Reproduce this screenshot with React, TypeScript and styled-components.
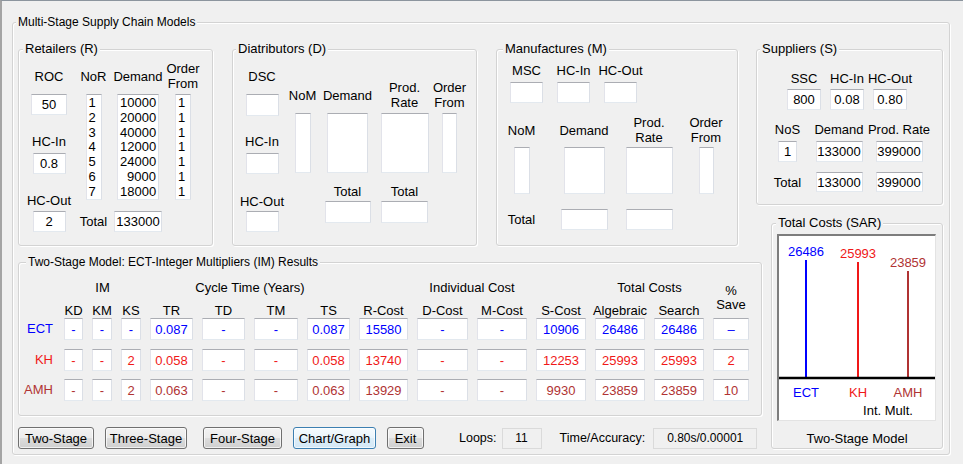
import React from 'react';
import styled, { createGlobalStyle } from 'styled-components';

const BLUE = '#0000ff';
const RED = '#f01818';
const BROWN = '#b03333';

const GlobalStyle = createGlobalStyle`
  * { box-sizing: border-box; }
  html, body { margin: 0; padding: 0; background: #f0f0f0; }
  body {
    font-family: "Liberation Sans", Arial, sans-serif;
    font-size: 13px;
    color: #000;
  }
`;

const Window = styled.div`
  width: 963px;
  height: 464px;
  overflow: hidden;
  background: #f0f0f0;
  border-top: 1px solid #8c959e;
  border-left: 2px solid #a4a4a4;
  padding: 14px 0 0 10px;
`;

const Panel = styled.fieldset<{ $area?: string }>`
  grid-area: ${(p) => p.$area ?? 'auto'};
  margin: 0;
  padding: 0;
  min-width: 0;
  border: 1px solid #d3d3d3;
  border-radius: 3px;
  box-shadow: inset 1px 1px 0 #fff, 1px 1px 0 #fff;
`;

const Frame = styled(Panel)`
  width: 938px;
  height: 440px;
`;

const Legend = styled.legend<{ $size?: number; $indent?: number }>`
  margin-left: ${(p) => p.$indent ?? 4}px;
  padding: 0 2px;
  font-size: ${(p) => p.$size ?? 13}px;
  line-height: 14px;
  background: #f0f0f0;
  white-space: nowrap;
`;

const Board = styled.div`
  display: grid;
  grid-template-columns: 195px 19px 245px 19px 242px 18px 6px 9px 172px;
  grid-template-rows: 163px 11px 30px 9px 161px 11px 22px;
  grid-template-areas:
    "ret . dis . man . sup sup sup"
    "ret . dis . man . . . ."
    "ret . dis . man . . . tot"
    ". . . . . . . . tot"
    "res res res res res res res . tot"
    ". . . . . . . . tot"
    "btn btn btn btn btn btn btn . tot";
  padding: 13px 0 0 5px;
`;

const PanelRow = styled.div<{ $pl: number; $gap?: number; $mt?: number }>`
  display: flex;
  align-items: flex-start;
  gap: ${(p) => p.$gap ?? 5}px;
  padding-left: ${(p) => p.$pl}px;
  margin-top: ${(p) => p.$mt ?? 0}px;
`;

const Stack = styled.div<{ $w: number }>`
  width: ${(p) => p.$w}px;
  display: flex;
  flex-direction: column;
  align-items: center;
`;

const Grid = styled.div<{ $cols: string; $rows: string; $gap?: number; $mt?: number; $ml?: number }>`
  display: grid;
  grid-template-columns: ${(p) => p.$cols};
  grid-template-rows: ${(p) => p.$rows};
  column-gap: ${(p) => p.$gap ?? 0}px;
  justify-items: center;
  align-items: start;
  margin-top: ${(p) => p.$mt ?? 0}px;
  margin-left: ${(p) => p.$ml ?? 0}px;
`;

const Label = styled.div<{ $mt?: number; $ml?: number; $self?: string; $size?: number }>`
  margin-top: ${(p) => p.$mt ?? 0}px;
  margin-left: ${(p) => p.$ml ?? 0}px;
  align-self: ${(p) => p.$self ?? 'auto'};
  font-size: ${(p) => p.$size ?? 13}px;
  line-height: 15px;
  white-space: nowrap;
  text-align: center;
`;

const Head = styled.div`
  height: 30px;
  display: flex;
  align-items: center;
  justify-content: center;
  text-align: center;
  line-height: 15px;
  white-space: nowrap;
`;

const Edit = styled.div<{ $w: number; $h?: number; $mt?: number; $color?: string; $self?: string; $at?: string }>`
  grid-area: ${(p) => p.$at ?? 'auto'};
  width: ${(p) => p.$w}px;
  height: ${(p) => p.$h ?? 21}px;
  margin-top: ${(p) => p.$mt ?? 0}px;
  align-self: ${(p) => p.$self ?? 'auto'};
  display: flex;
  align-items: center;
  justify-content: center;
  background: #fff;
  border: 1px solid;
  border-color: #abadb3 #dbdfe6 #e3e9ef #e2e3ea;
  color: ${(p) => p.$color ?? '#000'};
  line-height: 15px;
  white-space: nowrap;
`;

const ListBox = styled.div<{ $w: number; $h: number; $align?: string }>`
  width: ${(p) => p.$w}px;
  height: ${(p) => p.$h}px;
  background: #fff;
  border: 1px solid;
  border-color: #abadb3 #dbdfe6 #e3e9ef #e2e3ea;
  padding: 1px 2px 0;
  text-align: ${(p) => p.$align ?? 'left'};
  line-height: 14.8px;
  overflow: hidden;
`;

const Spacer = styled.div``;

const Axes = styled.div`
  width: 159px;
  height: 187px;
  margin: 4px 0 0 5px;
  background: #fff;
  border-top: 2px solid #7d7d7d;
  border-left: 2px solid #7d7d7d;
  border-right: 1px solid #e3e3e3;
  border-bottom: 1px solid #e3e3e3;
  svg { display: block; }
  text {
    font-family: "Liberation Sans", Arial, sans-serif;
    font-size: 13px;
  }
`;

const Caption = styled.div`
  margin-top: 9.5px;
  text-align: center;
  line-height: 15px;
`;

const Table = styled.div`
  display: grid;
  grid-template-columns: 36px 19px 20px 20px 43px 43px 44px 43px 49px 51px 50px 50px 50px 50px 36px;
  grid-template-rows: 22.5px 15.5px 31px 30px 22px;
  column-gap: 9px;
  justify-items: center;
  align-items: start;
  margin-top: 11px;
`;

const GroupHead = styled.div<{ $at: string }>`
  grid-area: ${(p) => p.$at};
  line-height: 15px;
  white-space: nowrap;
  text-align: center;
`;

const SaveHead = styled.div`
  grid-area: 1 / 15 / 3 / 16;
  align-self: end;
  margin-bottom: 6px;
  line-height: 14px;
  text-align: center;
`;

const RowLabel = styled.div<{ $color: string; $row: number }>`
  grid-area: ${(p) => p.$row} / 1;
  justify-self: end;
  padding-right: 2px;
  height: 22px;
  line-height: 22px;
  color: ${(p) => p.$color};
`;

const Footer = styled.div`
  grid-area: btn;
  display: flex;
  align-items: center;
`;

const Button = styled.button<{ $w: number; $ml?: number; $focus?: boolean }>`
  width: ${(p) => p.$w}px;
  height: 22px;
  margin: 0 0 0 ${(p) => p.$ml ?? 0}px;
  padding: 0;
  font: 13px "Liberation Sans", Arial, sans-serif;
  color: #000;
  border: 1px solid ${(p) => (p.$focus ? '#3c7fb1' : '#707070')};
  border-radius: 3px;
  background: ${(p) =>
    p.$focus
      ? 'linear-gradient(#f6fbfe, #e9f4fb 50%, #dcedf8 51%, #d3e8f6)'
      : 'linear-gradient(#f2f2f2, #ebebeb 50%, #dddddd 51%, #cfcfcf)'};
  box-shadow: inset 0 0 0 1px rgba(255, 255, 255, 0.7);
`;

const Readout = styled.div<{ $w: number; $ml?: number }>`
  width: ${(p) => p.$w}px;
  height: 21px;
  margin-left: ${(p) => p.$ml ?? 0}px;
  display: flex;
  align-items: center;
  justify-content: center;
  font-size: 12px;
  background: #f0f0f0;
  border: 1px solid #dadada;
`;

const resultCols = [
  { head: 'KD', w: 19 },
  { head: 'KM', w: 20 },
  { head: 'KS', w: 20 },
  { head: 'TR', w: 43 },
  { head: 'TD', w: 43 },
  { head: 'TM', w: 44 },
  { head: 'TS', w: 43 },
  { head: 'R-Cost', w: 49 },
  { head: 'D-Cost', w: 51 },
  { head: 'M-Cost', w: 50 },
  { head: 'S-Cost', w: 50 },
  { head: 'Algebraic', w: 50 },
  { head: 'Search', w: 50 },
  { head: '', w: 36 },
];

const results = [
  { name: 'ECT', color: BLUE, values: ['-', '-', '-', '0.087', '-', '-', '0.087', '15580', '-', '-', '10906', '26486', '26486', '–'] },
  { name: 'KH', color: RED, values: ['-', '-', '2', '0.058', '-', '-', '0.058', '13740', '-', '-', '12253', '25993', '25993', '2'] },
  { name: 'AMH', color: BROWN, values: ['-', '-', '2', '0.063', '-', '-', '0.063', '13929', '-', '-', '9930', '23859', '23859', '10'] },
];

const retailers = [
  [1, '10000'],
  [2, '20000'],
  [3, '40000'],
  [4, '12000'],
  [5, '24000'],
  [6, '9000'],
  [7, '18000'],
];

const Retailers: React.FC = () => (
  <Panel $area="ret">
    <Legend $indent={4}>Retailers (R)</Legend>
    <PanelRow $pl={7}>
      <Stack $w={46}>
        <Label $mt={12.5}>ROC</Label>
        <Edit $w={36} $mt={10.5}>50</Edit>
        <Label $mt={18.5}>HC-In</Label>
        <Edit $w={33} $mt={4.5}>0.8</Edit>
        <Label $mt={18.5}>HC-Out</Label>
        <Edit $w={33} $mt={3.5}>2</Edit>
      </Stack>
      <Grid $cols="33px 56px 34px" $rows="33px 117px 21px" $mt={5}>
        <Head>NoR</Head>
        <Head>Demand</Head>
        <Head>Order<br />From</Head>
        <ListBox $w={16} $h={106}>
          {retailers.map(([n]) => <div key={n}>{n}</div>)}
        </ListBox>
        <ListBox $w={42} $h={106} $align="right">
          {retailers.map(([n, d]) => <div key={n}>{d}</div>)}
        </ListBox>
        <ListBox $w={16} $h={106}>
          {retailers.map(([n]) => <div key={n}>1</div>)}
        </ListBox>
        <Label $self="center">Total</Label>
        <Edit $w={48}>133000</Edit>
        <Spacer />
      </Grid>
    </PanelRow>
  </Panel>
);

const Distributors: React.FC = () => (
  <Panel $area="dis">
    <Legend $indent={3}>Diatributors (D)</Legend>
    <PanelRow $pl={7}>
      <Stack $w={44}>
        <Label $mt={12.5}>DSC</Label>
        <Edit $w={33} $h={22} $mt={10.5} />
        <Label $mt={17.5}>HC-In</Label>
        <Edit $w={33} $mt={4.5} />
        <Label $mt={19.5}>HC-Out</Label>
        <Edit $w={33} $mt={2.5} />
      </Stack>
      <Grid $cols="27px 55px 51px 31px" $gap={4} $rows="33px 70.5px 17.5px 22px" $mt={24}>
        <Head>NoM</Head>
        <Head>Demand</Head>
        <Head>Prod.<br />Rate</Head>
        <Head>Order<br />From</Head>
        <ListBox $w={16} $h={60} />
        <ListBox $w={41} $h={60} />
        <ListBox $w={48} $h={60} />
        <ListBox $w={15} $h={60} />
        <Spacer />
        <Label>Total</Label>
        <Label>Total</Label>
        <Spacer />
        <Spacer />
        <Edit $w={46} $h={22} />
        <Edit $w={47} $h={22} />
        <Spacer />
      </Grid>
    </PanelRow>
  </Panel>
);

const Manufactures: React.FC = () => (
  <Panel $area="man">
    <Legend $indent={6}>Manufactures (M)</Legend>
    <PanelRow $pl={13} $gap={14} $mt={7}>
      {['MSC', 'HC-In', 'HC-Out'].map((t) => (
        <Stack key={t} $w={33}>
          <Label>{t}</Label>
          <Edit $w={33} $mt={4} />
        </Stack>
      ))}
    </PanelRow>
    <Grid $cols="47px 62px 52px 46px" $gap={8} $rows="32px 62px 21px" $mt={12} $ml={1}>
      <Head>NoM</Head>
      <Head>Demand</Head>
      <Head>Prod.<br />Rate</Head>
      <Head>Order<br />From</Head>
      <ListBox $w={16} $h={47} />
      <ListBox $w={41} $h={47} />
      <ListBox $w={47} $h={47} />
      <ListBox $w={15} $h={47} />
      <Label $self="center">Total</Label>
      <Edit $w={47} />
      <Edit $w={47} />
      <Spacer />
    </Grid>
  </Panel>
);

const Suppliers: React.FC = () => (
  <Panel $area="sup">
    <Legend $indent={3}>Suppliers (S)</Legend>
    <PanelRow $pl={30} $gap={9} $mt={14.5}>
      {[
        ['SSC', '800'],
        ['HC-In', '0.08'],
        ['HC-Out', '0.80'],
      ].map(([t, v]) => (
        <Stack key={t} $w={34}>
          <Label>{t}</Label>
          <Edit $w={34} $mt={3.5}>{v}</Edit>
        </Stack>
      ))}
    </PanelRow>
    <Grid $cols="41px 50px 58px" $gap={6} $rows="19.5px 31px 20px" $mt={11.5} $ml={10}>
      <Label>NoS</Label>
      <Label>Demand</Label>
      <Label>Prod. Rate</Label>
      <Edit $w={19}>1</Edit>
      <Edit $w={47}>133000</Edit>
      <Edit $w={47}>399000</Edit>
      <Label $self="center">Total</Label>
      <Edit $w={47} $h={20}>133000</Edit>
      <Edit $w={47} $h={20}>399000</Edit>
    </Grid>
  </Panel>
);

const bars = [
  { name: 'ECT', value: '26486', x: 27, top: 24, color: BLUE },
  { name: 'KH', value: '25993', x: 79, top: 26, color: RED },
  { name: 'AMH', value: '23859', x: 129, top: 35, color: BROWN },
];

const TotalCosts: React.FC = () => (
  <Panel $area="tot">
    <Legend $indent={4}>Total Costs (SAR)</Legend>
    <Axes>
      <svg width="156" height="184" viewBox="0 0 156 184">
        {bars.map((b) => (
          <g key={b.name}>
            <line x1={b.x} y1={b.top} x2={b.x} y2={142} stroke={b.color} strokeWidth="2" />
            <text x={b.x} y={b.top - 4.5} textAnchor="middle" fill={b.color}>{b.value}</text>
            <text x={b.x} y={160.5} textAnchor="middle" fill={b.color}>{b.name}</text>
          </g>
        ))}
        <line x1="0" y1="142" x2="156" y2="142" stroke="#000" strokeWidth="2.5" />
        <text x="109" y="178.5" textAnchor="middle" fill="#000">Int. Mult.</text>
      </svg>
    </Axes>
    <Caption>Two-Stage Model</Caption>
  </Panel>
);

const Results: React.FC = () => (
  <Panel $area="res">
    <Legend $size={12} $indent={7}>Two-Stage Model: ECT-Integer Multipliers (IM) Results</Legend>
    <Table>
      <GroupHead $at="1 / 2 / 2 / 5">IM</GroupHead>
      <GroupHead $at="1 / 5 / 2 / 9">Cycle Time (Years)</GroupHead>
      <GroupHead $at="1 / 10 / 2 / 12">Individual Cost</GroupHead>
      <GroupHead $at="1 / 13 / 2 / 15">Total Costs</GroupHead>
      <SaveHead>%<br />Save</SaveHead>
      {resultCols.map((c, i) =>
        c.head ? (
          <GroupHead key={c.head} $at={`2 / ${i + 2}`}>{c.head}</GroupHead>
        ) : null
      )}
      {results.map((r, ri) => (
        <React.Fragment key={r.name}>
          <RowLabel $color={r.color} $row={ri + 3}>{r.name}</RowLabel>
          {r.values.map((v, ci) => (
            <Edit key={ci} $at={`${ri + 3} / ${ci + 2}`} $w={resultCols[ci].w} $h={22} $color={r.color}>
              {v}
            </Edit>
          ))}
        </React.Fragment>
      ))}
    </Table>
  </Panel>
);

const Controls: React.FC = () => (
  <Footer>
    <Button $w={76}>Two-Stage</Button>
    <Button $w={82} $ml={11}>Three-Stage</Button>
    <Button $w={79} $ml={16}>Four-Stage</Button>
    <Button $w={83} $ml={11} $focus>Chart/Graph</Button>
    <Button $w={37} $ml={11}>Exit</Button>
    <Label $size={12.5} $ml={35}>Loops:</Label>
    <Readout $w={40} $ml={5}>11</Readout>
    <Label $size={12.5} $ml={18}>Time/Accuracy:</Label>
    <Readout $w={104} $ml={8}>0.80s/0.00001</Readout>
  </Footer>
);

const App: React.FC = () => (
  <>
    <GlobalStyle />
    <Window>
      <Frame>
        <Legend $size={12} $indent={3}>Multi-Stage Supply Chain Models</Legend>
        <Board>
          <Retailers />
          <Distributors />
          <Manufactures />
          <Suppliers />
          <TotalCosts />
          <Results />
          <Controls />
        </Board>
      </Frame>
    </Window>
  </>
);

export default App;
